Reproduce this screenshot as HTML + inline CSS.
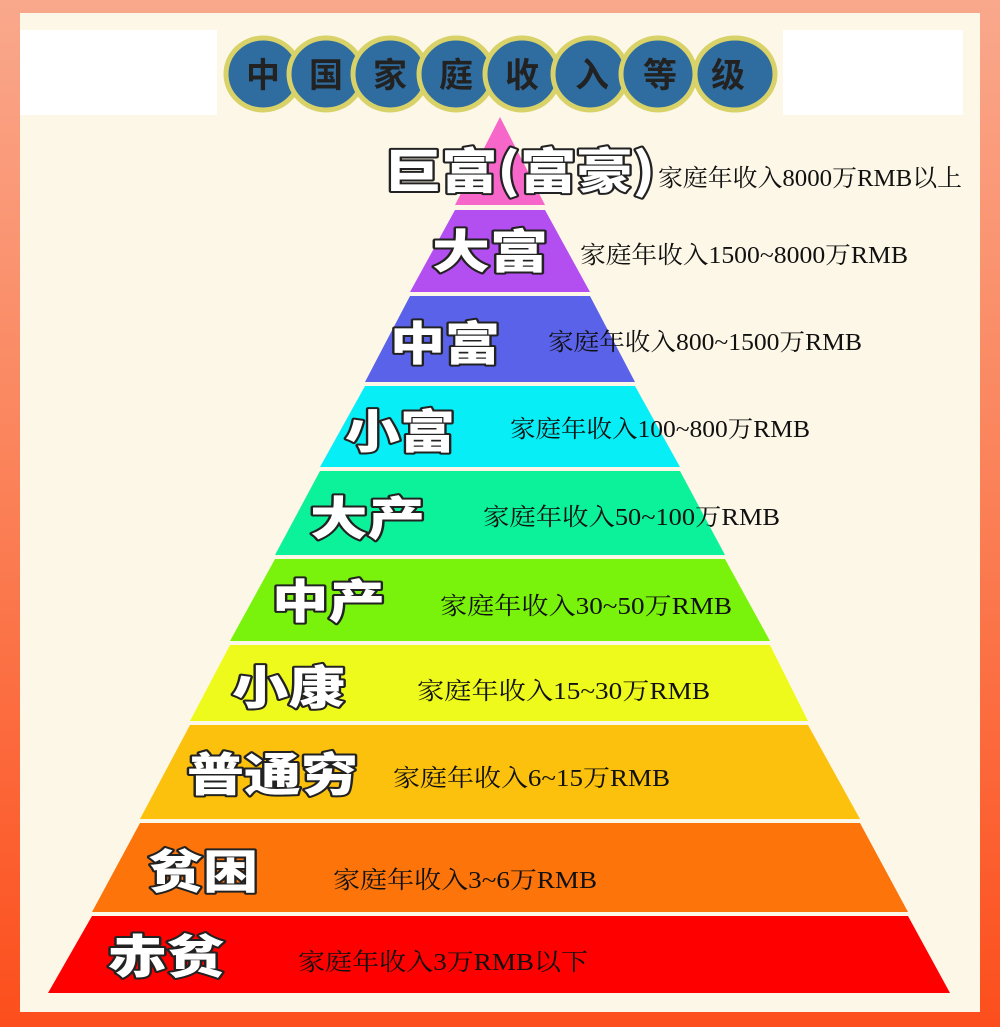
<!DOCTYPE html>
<html><head><meta charset="utf-8"><style>
html,body{margin:0;padding:0;}
body{width:1000px;height:1027px;overflow:hidden;background:linear-gradient(#f9a88c,#fb7f55 50%,#fc4e1c);}
svg{display:block}
.lab{font-family:"Noto Sans CJK SC","WenQuanYi Zen Hei",sans-serif;font-weight:900;fill:#fff;stroke:#222;stroke-width:4;paint-order:stroke;stroke-linejoin:round}
.d{font-family:"Liberation Serif","Noto Serif CJK SC",serif;font-size:24px;fill:#111}
.t{font-family:"Noto Sans CJK SC",sans-serif;font-weight:700;font-size:34px;fill:#222}
</style></head><body>
<svg width="1000" height="1027" viewBox="0 0 1000 1027">
<rect x="20" y="13" width="960" height="999" fill="#fdf7e7"/>
<rect x="20" y="30" width="197" height="85" fill="#fff"/>
<rect x="783" y="30" width="180" height="85" fill="#fff"/>
<g fill="#2f6da0" stroke="#d8d268" stroke-width="5">
<ellipse cx="263" cy="74" rx="37" ry="36"/>
<ellipse cx="326" cy="74" rx="37" ry="36"/>
<ellipse cx="390" cy="74" rx="37" ry="36"/>
<ellipse cx="456" cy="74" rx="37" ry="36"/>
<ellipse cx="522" cy="74" rx="37" ry="36"/>
<ellipse cx="590" cy="74" rx="37" ry="36"/>
<ellipse cx="658" cy="74" rx="37" ry="36"/>
<ellipse cx="735" cy="74" rx="40" ry="36"/>
</g>
<g class="t" text-anchor="middle">
<text x="263" y="87">中</text><text x="326" y="87">国</text><text x="390" y="87">家</text><text x="456" y="87">庭</text><text x="522" y="87">收</text><text x="592" y="87">入</text><text x="660" y="87">等</text><text x="728" y="87">级</text>
</g>
<polygon points="500,117 545,205 455,205" fill="#f767c9"/>
<polygon points="455,210 545,210 590,292 410,292" fill="#b34ef0"/>
<polygon points="410,296 590,296 635,382 365,382" fill="#5b62ea"/>
<polygon points="365,386 635,386 680,467 320,467" fill="#08eef6"/>
<polygon points="320,471 680,471 725,555 275,555" fill="#0cf29a"/>
<polygon points="275,559 725,559 770,641 230,641" fill="#79f30c"/>
<polygon points="230,645 770,645 808,721 190,721" fill="#eefa1c"/>
<polygon points="190,725 808,725 860,819 140,819" fill="#fbc10c"/>
<polygon points="140,823 860,823 908,912 92,912" fill="#fc740a"/>
<polygon points="92,916 908,916 950,993 48,993" fill="#fe0000"/>
<g class="lab">
<text x="385" y="188" font-size="48" textLength="270" lengthAdjust="spacingAndGlyphs">巨富(富豪)</text>
<text x="432" y="268" font-size="46" textLength="116" lengthAdjust="spacingAndGlyphs">大富</text>
<text x="390" y="360" font-size="46" textLength="110" lengthAdjust="spacingAndGlyphs">中富</text>
<text x="345" y="448" font-size="46" textLength="110" lengthAdjust="spacingAndGlyphs">小富</text>
<text x="310" y="535" font-size="46" textLength="115" lengthAdjust="spacingAndGlyphs">大产</text>
<text x="272" y="618" font-size="46" textLength="113" lengthAdjust="spacingAndGlyphs">中产</text>
<text x="232" y="704" font-size="46" textLength="113" lengthAdjust="spacingAndGlyphs">小康</text>
<text x="187" y="791" font-size="46" textLength="171" lengthAdjust="spacingAndGlyphs">普通穷</text>
<text x="148" y="888" font-size="46" textLength="110" lengthAdjust="spacingAndGlyphs">贫困</text>
<text x="108" y="973" font-size="46" textLength="117" lengthAdjust="spacingAndGlyphs">赤贫</text>
</g>
<g class="d">
<text x="658" y="186" textLength="304" lengthAdjust="spacingAndGlyphs">家庭年收入8000万RMB以上</text>
<text x="580" y="263" textLength="328" lengthAdjust="spacingAndGlyphs">家庭年收入1500~8000万RMB</text>
<text x="548" y="350" textLength="314" lengthAdjust="spacingAndGlyphs">家庭年收入800~1500万RMB</text>
<text x="510" y="437" textLength="300" lengthAdjust="spacingAndGlyphs">家庭年收入100~800万RMB</text>
<text x="483" y="525" textLength="297" lengthAdjust="spacingAndGlyphs">家庭年收入50~100万RMB</text>
<text x="440" y="614" textLength="292" lengthAdjust="spacingAndGlyphs">家庭年收入30~50万RMB</text>
<text x="417" y="699" textLength="293" lengthAdjust="spacingAndGlyphs">家庭年收入15~30万RMB</text>
<text x="393" y="786" textLength="277" lengthAdjust="spacingAndGlyphs">家庭年收入6~15万RMB</text>
<text x="333" y="888" textLength="264" lengthAdjust="spacingAndGlyphs">家庭年收入3~6万RMB</text>
<text x="298" y="970" textLength="290" lengthAdjust="spacingAndGlyphs">家庭年收入3万RMB以下</text>
</g>
</svg>
</body></html>
